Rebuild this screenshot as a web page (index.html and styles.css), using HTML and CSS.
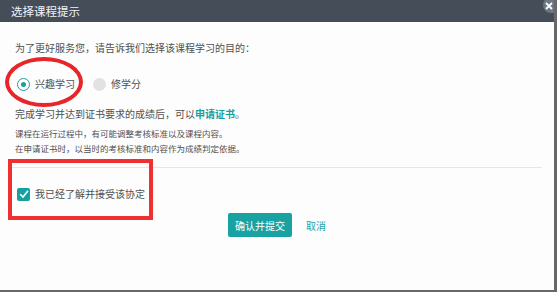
FILE: index.html
```html
<!DOCTYPE html>
<html lang="zh-CN">
<head>
  <meta charset="UTF-8">
  <title>选择课程提示</title>
  <link rel="stylesheet" href="styles.css">
</head>
<body>
  <div class="dialog">
    <div class="dialog-header">
      <span class="dialog-title">选择课程提示</span>
      <span class="close-btn">
        <svg width="8" height="8" viewBox="0 0 8 8"><path d="M1 1 L7 7 M7 1 L1 7" stroke="#fff" stroke-width="1.8"/></svg>
      </span>
    </div>
    <div class="dialog-body">
      <p class="intro">为了更好服务您，请告诉我们选择该课程学习的目的：</p>
      <div class="options">
        <label class="option"><span class="radio checked"></span>兴趣学习</label>
        <label class="option"><span class="radio"></span>修学分</label>
      </div>
      <p class="cert">完成学习并达到证书要求的成绩后，可以<a class="link">申请证书</a>。</p>
      <p class="notes">课程在运行过程中，有可能调整考核标准以及课程内容。<br>在申请证书时，以当时的考核标准和内容作为成绩判定依据。</p>
      <div class="divider"></div>
      <label class="agree">
        <span class="checkbox">
          <svg width="12" height="12" viewBox="0 0 12 12"><path d="M2.2 6.2 L5 9 L10 2.8" fill="none" stroke="#fff" stroke-width="1.6"/></svg>
        </span>
        我已经了解并接受该协定
      </label>
      <div class="actions">
        <button class="btn-primary">确认并提交</button>
        <a class="btn-cancel">取消</a>
      </div>
    </div>

    <!-- annotations drawn over the screenshot -->
    <div class="mark-ellipse"></div>
    <div class="mark-box"></div>
  </div>
</body>
</html>
```

FILE: styles.css
```css
body {
  margin: 0;
  background: #686868;
  font-family: "Noto Sans CJK SC", "Noto Sans", sans-serif;
  width: 557px;
  height: 292px;
  overflow: hidden;
}
.dialog {
  position: relative;
  width: 554px;
  height: 290px;
  background: #fdfdfd;
  overflow: hidden;
}
.dialog-header {
  height: 22px;
  background: #454e58;
  display: flex;
  align-items: center;
  padding-left: 11px;
}
.dialog-title {
  color: #f2f4f6;
  font-size: 11.5px;
  line-height: 22px;
}
.close-btn {
  position: absolute;
  top: -3px;
  right: -5px;
  width: 16px;
  height: 16px;
  border-radius: 50%;
  background: #6c7783;
  display: flex;
  align-items: center;
  justify-content: center;
  box-sizing: border-box;
  padding: 2px 5px 0 0;
}
.dialog-body {
  padding: 0 15px;
  color: #505050;
  font-size: 10px;
}
.intro {
  margin: 18px 0 0;
  line-height: 16px;
}
.options {
  display: flex;
  gap: 2px;
  margin-top: 20px;
  height: 16px;
  align-items: center;
}
.option {
  display: flex;
  align-items: center;
  gap: 5px;
  line-height: 16px;
  width: 74px;
}
.radio {
  width: 13px;
  height: 13px;
  border-radius: 50%;
  background: #e2e2e2;
  box-sizing: border-box;
  margin-left: 2px;
}
.radio.checked {
  background: #fff;
  border: 1.5px solid #17a0a0;
  display: flex;
  align-items: center;
  justify-content: center;
}
.radio.checked::after {
  content: "";
  width: 5px;
  height: 5px;
  border-radius: 50%;
  background: #17a0a0;
}
.cert {
  margin: 14px 0 0;
  line-height: 16px;
}
.link {
  color: #169e9e;
  font-weight: bold;
}
.notes {
  margin: 4px 0 0;
  font-size: 8.5px;
  line-height: 15px;
}
.divider {
  margin: 11px -3px 0;
  height: 1px;
  background: #e3e7ea;
}
.agree {
  display: flex;
  align-items: center;
  gap: 5px;
  margin-top: 18px;
  line-height: 16px;
}
.checkbox {
  width: 13px;
  height: 13px;
  background: #17a0a0;
  border-radius: 2px;
  margin-left: 2px;
  display: flex;
  align-items: center;
  justify-content: center;
}
.actions {
  display: flex;
  justify-content: center;
  align-items: center;
  gap: 14px;
  margin-top: 11px;
}
.btn-primary {
  width: 64px;
  height: 24px;
  border: none;
  border-radius: 2px;
  background: #18a2a2;
  color: #fff;
  font-family: inherit;
  font-size: 10px;
  padding: 0;
}
.btn-cancel {
  color: #1f9fa8;
  font-size: 10px;
}
.mark-ellipse {
  position: absolute;
  left: 5px;
  top: 57px;
  width: 78px;
  height: 50px;
  box-sizing: border-box;
  border: 4px solid #e8262a;
  border-radius: 50%;
}
.mark-box {
  position: absolute;
  left: 8px;
  top: 159px;
  width: 145px;
  height: 61px;
  box-sizing: border-box;
  border: 4px solid #ef3030;
}
```
